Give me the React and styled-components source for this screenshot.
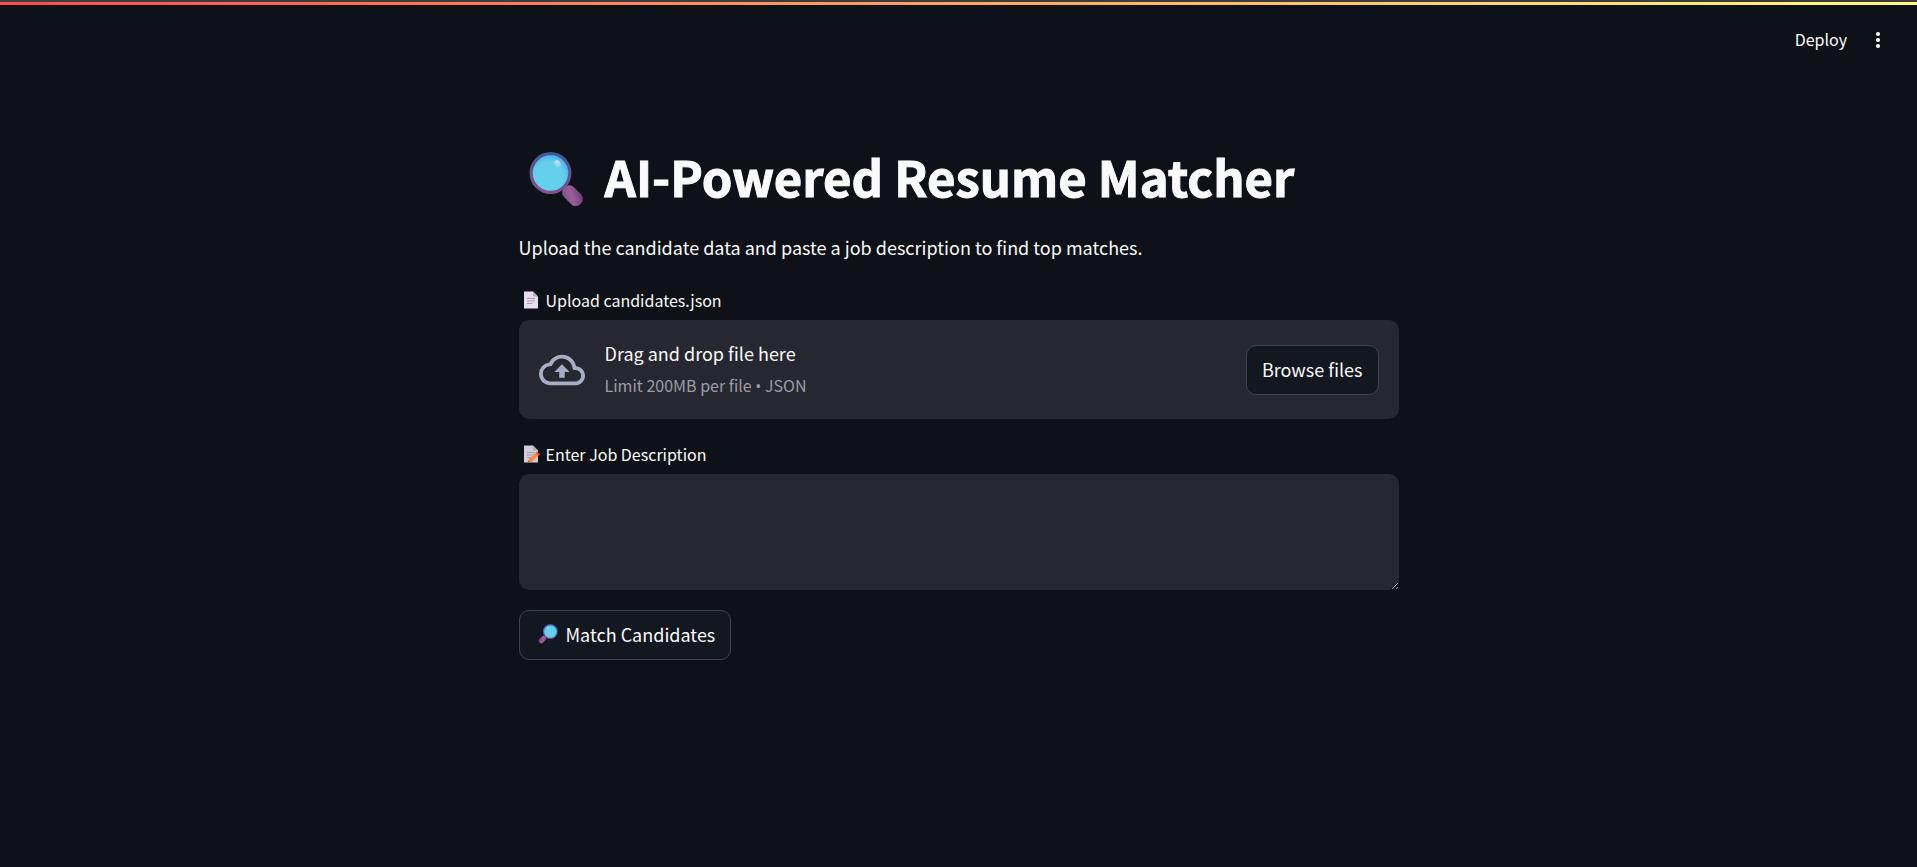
import React, { useId, useRef } from "react";
import styled, { createGlobalStyle } from "styled-components";

const GlobalStyle = createGlobalStyle`
  *, *::before, *::after { box-sizing: border-box; }
  html { color-scheme: dark; background: #0e1117; }
  body {
    margin: 0;
    color: #fafafa;
    background: #0e1117;
    font-family: "Noto Sans CJK SC", "Noto Sans", sans-serif;
    font-size: 18px;
    line-height: 30px;
  }
  button, textarea { font: inherit; color: inherit; }
`;

const Page = styled.div`
  min-height: 100vh;
  display: flex;
  flex-direction: column;
`;

const Decoration = styled.div`
  height: 5px;
  border-top: 2px solid #3c3c3c;
  background: linear-gradient(90deg, #ff4b4b, #fffd80);
`;

const Header = styled.header`
  display: flex;
  justify-content: flex-end;
  align-items: center;
  gap: 8px;
  height: 70px;
  padding: 0 24px;
`;

const ToolbarButton = styled.button`
  display: flex;
  align-items: center;
  justify-content: center;
  height: 30px;
  min-width: 30px;
  padding: ${(p) => (p.$icon ? "0" : "0 8px 2px")};
  border: 0;
  border-radius: 10px;
  background: transparent;
  font-size: 16px;
  line-height: 28px;
  cursor: pointer;
`;

const Main = styled.main`
  width: 100%;
  max-width: 880px;
  margin: 0 auto;
  padding: 69px 0 80px;
  display: flex;
  flex-direction: column;
  gap: 20px;
`;

const Title = styled.h1`
  display: flex;
  align-items: flex-end;
  gap: 20px;
  margin: 0 0 4px;
  padding-left: 10px;
  font-size: 49px;
  font-weight: 700;
  line-height: 64px;
  -webkit-text-stroke: 1px #fafafa;
`;

const Intro = styled.p`
  margin: 0 0 3px;
`;

const Field = styled.div`
  display: flex;
  flex-direction: column;
  gap: 5px;
`;

const FieldLabel = styled.label`
  display: flex;
  align-items: center;
  gap: 5px;
  padding-left: 4px;
  font-size: 16px;
  line-height: 30px;
`;

const DropZone = styled.section`
  display: flex;
  align-items: center;
  gap: 20px;
  min-height: 99px;
  padding: 16px 20px;
  border-radius: 10px;
  background: #262730;
`;

const DropText = styled.div`
  flex: 1;
  display: flex;
  flex-direction: column;
  gap: 2px;
`;

const DropHint = styled.small`
  color: #9c9da3;
  font-size: 16px;
  line-height: 30px;
`;

const Bullet = styled.span`
  font-family: "Open Sans", sans-serif;
`;

const FileInput = styled.input`
  display: none;
`;

const Button = styled.button`
  display: inline-flex;
  align-items: center;
  align-self: ${(p) => (p.$start ? "flex-start" : "center")};
  gap: 8px;
  height: 50px;
  padding: 0 15px 2px ${(p) => (p.$start ? 18 : 15)}px;
  border: 1px solid #41434a;
  border-radius: 10px;
  background: #131720;
  cursor: pointer;
`;

const TextArea = styled.textarea`
  display: block;
  width: 100%;
  height: 116px;
  padding: 16px;
  border: 0;
  border-radius: 10px;
  outline: 0;
  background: #262730;
  resize: vertical;
`;

function Magnifier({ size, flip }) {
  const id = useId();
  return (
    <svg width={size} height={size} viewBox="0 0 56 56" aria-hidden="true">
      <defs>
        <linearGradient id={id + "r"} x1="0" y1="0" x2="0" y2="1">
          <stop offset="0" stopColor="#41598f" />
          <stop offset="1" stopColor="#835092" />
        </linearGradient>
        <radialGradient id={id + "g"} cx=".45" cy=".6" r=".6">
          <stop offset=".7" stopColor="#65d0ec" />
          <stop offset="1" stopColor="#49b5ed" />
        </radialGradient>
        <linearGradient id={id + "h"} x1="0" y1="1" x2="1" y2="0">
          <stop offset="0" stopColor="#75508f" />
          <stop offset=".45" stopColor="#99609b" />
          <stop offset="1" stopColor="#673774" />
        </linearGradient>
        <linearGradient id={id + "s"} x1="1" y1="0" x2="0" y2="1">
          <stop offset="0" stopColor="#d9e1fb" />
          <stop offset="1" stopColor="#7fcdef" />
        </linearGradient>
      </defs>
      <g transform={flip ? "translate(56 0) scale(-1 1)" : undefined}>
        <rect x="-11" y="-6.5" width="23" height="14" rx="6.5" transform="translate(43.5 43) rotate(45)" fill={`url(#${id}h)`} />
        <circle cx="21.5" cy="21" r="21" fill={`url(#${id}r)`} />
        <circle cx="21.5" cy="21" r="17.8" fill={`url(#${id}g)`} />
        <ellipse cx="28.5" cy="11.5" rx="2.8" ry="3.6" transform="rotate(-40 28.5 11.5)" fill={`url(#${id}s)`} />
      </g>
    </svg>
  );
}

function PageGlyph({ pencil }) {
  return (
    <svg width="18" height="18" viewBox="0 0 18 18" aria-hidden="true">
      <path d="M1 0.5H10L15 5.5V17.5H1Z" fill={pencil ? "#d3cadb" : "#e6ddef"} />
      <path d="M10 0.5L15 5.5H10Z" fill="#b9a9c4" />
      <path d="M4 7.5H12M4 10H12M4 12.5H9.5" stroke="#aaa0b2" strokeWidth="1" />
      {pencil && (
        <>
          <path d="M5 17.5L6 13.8L12.5 8L15.3 10.8L8.8 16.8Z" fill="#f98c42" />
          <path d="M12.5 8L14.2 6.6L17 9.4L15.3 10.8Z" fill="#ed4c4c" />
          <path d="M5 17.5L5.4 15.8L6.8 17Z" fill="#704c4c" />
        </>
      )}
    </svg>
  );
}

function CloudUpload() {
  return (
    <svg width="46" height="46" viewBox="0 0 24 24" fill="#a9adc3" aria-hidden="true">
      <path d="M19.35 10.04A7.49 7.49 0 0012 4C9.11 4 6.6 5.64 5.35 8.04A5.994 5.994 0 000 14c0 3.31 2.69 6 6 6h13c2.76 0 5-2.24 5-5 0-2.64-2.05-4.78-4.65-4.96zM19 18H6c-2.21 0-4-1.79-4-4 0-2.05 1.53-3.76 3.56-3.97l1.07-.11.5-.95A5.469 5.469 0 0112 6c2.62 0 4.88 1.86 5.39 4.43l.3 1.5 1.53.11A2.98 2.98 0 0122 15c0 1.65-1.35 3-3 3zM8 13h2.55v3h2.9v-3H16l-4-4z" />
    </svg>
  );
}

function MoreDots() {
  return (
    <svg width="20" height="20" viewBox="0 0 20 20" fill="#fafafa" aria-hidden="true">
      <circle cx="10" cy="4" r="2.1" />
      <circle cx="10" cy="10" r="2.1" />
      <circle cx="10" cy="16" r="2.1" />
    </svg>
  );
}

export default function App() {
  const fileRef = useRef(null);
  return (
    <Page>
      <GlobalStyle />
      <Decoration />
      <Header>
        <ToolbarButton type="button">Deploy</ToolbarButton>
        <ToolbarButton type="button" $icon aria-label="Main menu">
          <MoreDots />
        </ToolbarButton>
      </Header>
      <Main>
        <Title>
          <Magnifier size={56} />
          AI-Powered Resume Matcher
        </Title>
        <Intro>Upload the candidate data and paste a job description to find top matches.</Intro>
        <Field>
          <FieldLabel htmlFor="candidates">
            <PageGlyph />
            Upload candidates.json
          </FieldLabel>
          <DropZone>
            <CloudUpload />
            <DropText>
              <span>Drag and drop file here</span>
              <DropHint>
                Limit 200MB per file <Bullet>•</Bullet> JSON
              </DropHint>
            </DropText>
            <FileInput id="candidates" ref={fileRef} type="file" accept=".json" />
            <Button type="button" onClick={() => fileRef.current.click()}>
              Browse files
            </Button>
          </DropZone>
        </Field>
        <Field>
          <FieldLabel htmlFor="job">
            <PageGlyph pencil />
            Enter Job Description
          </FieldLabel>
          <TextArea id="job" />
        </Field>
        <Button type="button" $start>
          <Magnifier size={20} flip />
          Match Candidates
        </Button>
      </Main>
    </Page>
  );
}
